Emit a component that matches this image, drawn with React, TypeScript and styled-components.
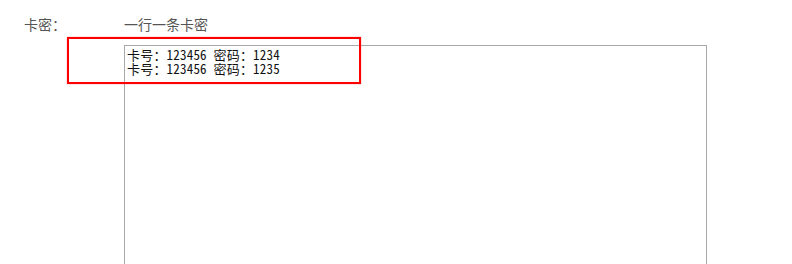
import React from "react";
import styled, { createGlobalStyle } from "styled-components";

const GlobalStyle = createGlobalStyle`
  html, body {
    margin: 0;
    padding: 0;
    background: #ffffff;
    font-family: "Noto Sans CJK SC", "Noto Sans", sans-serif;
  }
`;

const Page = styled.div`
  position: relative;
  width: 792px;
  height: 264px;
  overflow: hidden;
  padding: 14px 0 0 24px;
  box-sizing: border-box;
`;

const FormRow = styled.div`
  display: flex;
  align-items: flex-start;
`;

const Label = styled.label`
  width: 100px;
  flex: none;
  font-size: 14px;
  line-height: 20px;
  color: #555555;
`;

const Field = styled.div`
  display: flex;
  flex-direction: column;
  gap: 11px;
`;

const Hint = styled.div`
  font-size: 14px;
  line-height: 20px;
  color: #555555;
`;

const CardArea = styled.textarea`
  display: block;
  width: 583px;
  height: 260px;
  box-sizing: border-box;
  margin: 0;
  border: 1px solid #a9a9a9;
  padding: 2px 2px;
  font-family: "Noto Sans Mono CJK SC", "Noto Sans CJK SC", monospace;
  font-size: 13px;
  font-weight: 400;
  letter-spacing: 0.2px;
  line-height: 14px;
  color: #111111;
  background: #ffffff;
  resize: none;
  outline: none;
`;

const Highlight = styled.div`
  position: absolute;
  left: 67px;
  top: 37px;
  width: 294px;
  height: 47px;
  box-sizing: border-box;
  border: 2px solid #ff0000;
  box-shadow: 0 0 1px rgba(255, 0, 0, 0.6);
  pointer-events: none;
`;

export default function App() {
  return (
    <>
      <GlobalStyle />
      <Page>
        <FormRow>
          <Label>卡密：</Label>
          <Field>
            <Hint>一行一条卡密</Hint>
            <CardArea
              defaultValue={"卡号：123456 密码：1234\n卡号：123456 密码：1235"}
            />
          </Field>
        </FormRow>
        <Highlight />
      </Page>
    </>
  );
}
